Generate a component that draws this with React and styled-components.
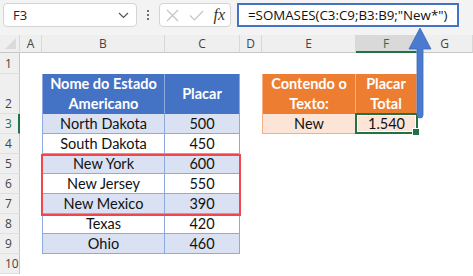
import React from "react"
import styled, { createGlobalStyle } from "styled-components"

const GlobalStyle = createGlobalStyle`
  body {
    margin: 0;
    background: #fff;
    font-family: "Liberation Sans", Arial, sans-serif;
  }
`

const Screen = styled.div`
  position: relative;
  width: 473px;
  height: 276px;
  overflow: hidden;
  background: #fff;
`

const FormulaBar = styled.div`
  display: flex;
  align-items: center;
  height: 35px;
  padding: 0 0 5px 3px;
  box-sizing: border-box;
  background: #f3f3f3;
`

const NameBox = styled.div`
  display: flex;
  align-items: center;
  justify-content: space-between;
  width: 134px;
  height: 24px;
  box-sizing: border-box;
  padding: 0 7px 0 9px;
  background: #fff;
  border: 1px solid #d4d4d4;
  border-radius: 4px;
  font-family: "Open Sans", sans-serif;
  font-size: 13px;
  color: #222;
`

const Dots = styled.div`
  width: 22px;
  display: flex;
  flex-direction: column;
  align-items: center;
  gap: 2px;
  span {
    width: 2px;
    height: 2px;
    background: #444;
    border-radius: 1px;
  }
`

const IconBox = styled.div`
  display: flex;
  align-items: center;
  justify-content: space-between;
  width: 72px;
  height: 24px;
  box-sizing: border-box;
  padding: 0 5px 0 6px;
  background: #fff;
  border: 1px solid #d4d4d4;
  border-radius: 4px;
`

const Fx = styled.span`
  font-family: "Liberation Serif", serif;
  font-style: italic;
  font-size: 16px;
  color: #333;
`

const FormulaInput = styled.div`
  display: flex;
  align-items: center;
  margin-left: 6px;
  width: 222px;
  height: 24px;
  box-sizing: border-box;
  padding-left: 9px;
  background: #fff;
  border: 2px solid #4472c4;
  font-family: "Open Sans", sans-serif;
  font-size: 13.3px;
  color: #111;
  white-space: nowrap;
`

const Sheet = styled.div`
  position: relative;
  display: grid;
  grid-template-columns: 20px 22px 123px 75px 22px 94px 61px 1fr;
  grid-template-rows: 18px 21px 40px repeat(8, 20px);
  font-family: "Lato", "Liberation Sans", sans-serif;
`

const Corner = styled.div`
  position: relative;
  background: #efefef;
  border-right: 1px solid #d8d8d8;
  border-bottom: 1px solid #c6c6c6;
  &::after {
    content: "";
    position: absolute;
    right: 3px;
    bottom: 3px;
    border-style: solid;
    border-width: 0 0 11px 11px;
    border-color: transparent transparent #dadada transparent;
  }
`

const ColHead = styled.div`
  display: flex;
  align-items: center;
  justify-content: center;
  background: ${p => (p.$active ? "#d9d9d9" : "#efefef")};
  border-right: 1px solid #d8d8d8;
  border-bottom: ${p => (p.$active ? "2px solid #217346" : "1px solid #c6c6c6")};
  font-family: "Open Sans", sans-serif;
  font-size: 12px;
  color: ${p => (p.$active ? "#217346" : "#444")};
`

const RowHead = styled.div`
  display: flex;
  align-items: flex-end;
  justify-content: flex-start;
  padding: 0 0 1px 5px;
  background: #efefef;
  border-right: ${p => (p.$active ? "2px solid #217346" : "1px solid #c6c6c6")};
  border-bottom: 1px solid #e0e0e0;
  font-family: "Open Sans", sans-serif;
  font-size: 12px;
  color: ${p => (p.$active ? "#217346" : "#444")};
`

const Blank = styled.div`
  background: #fff;
`

const DataCell = styled.div`
  display: flex;
  align-items: center;
  justify-content: center;
  text-align: center;
  font-size: 14.5px;
  line-height: 20px;
  color: #111;
`

const BlueHead = styled(DataCell)`
  background: #4472c4;
  color: #fff;
  font-weight: 700;
  border-right: 1px solid #8ea9db;
  border-left: ${p => (p.$first ? "1px solid #8ea9db" : "none")};
`

const BlueCell = styled(DataCell)`
  background: ${p => (p.$alt ? "#d9e1f2" : "#fff")};
  border-right: 1px solid #8ea9db;
  border-bottom: 1px solid #8ea9db;
  border-left: ${p => (p.$first ? "1px solid #8ea9db" : "none")};
`

const OrangeHead = styled(DataCell)`
  background: #ed7d31;
  color: #fff;
  font-weight: 700;
  border-right: 1px solid #f4b084;
  border-left: ${p => (p.$first ? "1px solid #f4b084" : "none")};
`

const OrangeCell = styled(DataCell)`
  position: relative;
  background: #fce4d6;
  border-right: 1px solid #f4b084;
  border-bottom: 1px solid #f4b084;
  border-left: ${p => (p.$first ? "1px solid #f4b084" : "none")};
  ${p =>
    p.$selected &&
    `
    border: 2px solid #217346;
    box-shadow: inset 0 0 0 1px #fff;
    margin: -1px -1px 0 -1px;
  `}
`

const Handle = styled.span`
  position: absolute;
  right: -4px;
  bottom: -4px;
  width: 6px;
  height: 6px;
  background: #217346;
  border: 1px solid #fff;
`

/* red frame over B5:C7, sits on top of the cells without taking a grid slot */
const Highlight = styled.div`
  position: absolute;
  grid-column: 3 / 5;
  grid-row: 6 / 9;
  top: 0;
  left: -1px;
  right: -1px;
  bottom: -2px;
  border: 2px solid #f0474f;
  pointer-events: none;
`

const Arrow = styled.svg`
  position: absolute;
  left: 408px;
  top: 27px;
`

const columns = ["A", "B", "C", "D", "E", "F", "G"]

const states = [
  ["North Dakota", 500],
  ["South Dakota", 450],
  ["New York", 600],
  ["New Jersey", 550],
  ["New Mexico", 390],
  ["Texas", 420],
  ["Ohio", 460],
]

const Chevron = () => (
  <svg width="11" height="7" viewBox="0 0 11 7">
    <path d="M1 1l4.5 4.5L10 1" fill="none" stroke="#555" strokeWidth="1.2" />
  </svg>
)

const Cross = () => (
  <svg width="13" height="13" viewBox="0 0 13 13">
    <path d="M1 1l11 11M12 1L1 12" stroke="#c4c4c4" strokeWidth="1.2" />
  </svg>
)

const Check = () => (
  <svg width="15" height="11" viewBox="0 0 15 11">
    <path d="M1 5.5l4.5 4.5L14 1" fill="none" stroke="#c4c4c4" strokeWidth="1.2" />
  </svg>
)

const App = () => {
  const rows = []
  for (let r = 1; r <= 10; r++) {
    const cells = [
      <RowHead key={`h${r}`} $active={r === 3}>{r}</RowHead>,
      <Blank key={`a${r}`} />,
    ]

    if (r === 2) {
      cells.push(
        <BlueHead key="b2" $first>Nome do Estado<br />Americano</BlueHead>,
        <BlueHead key="c2">Placar</BlueHead>
      )
    } else if (r >= 3 && r <= 9) {
      const [name, score] = states[r - 3]
      const alt = r % 2 === 1
      cells.push(
        <BlueCell key={`b${r}`} $first $alt={alt}>{name}</BlueCell>,
        <BlueCell key={`c${r}`} $alt={alt}>{score}</BlueCell>
      )
    } else {
      cells.push(<Blank key={`b${r}`} />, <Blank key={`c${r}`} />)
    }

    cells.push(<Blank key={`d${r}`} />)

    if (r === 2) {
      cells.push(
        <OrangeHead key="e2" $first>Contendo o<br />Texto:</OrangeHead>,
        <OrangeHead key="f2">Placar<br />Total</OrangeHead>
      )
    } else if (r === 3) {
      cells.push(
        <OrangeCell key="e3" $first>New</OrangeCell>,
        <OrangeCell key="f3" $selected>1.540<Handle /></OrangeCell>
      )
    } else {
      cells.push(<Blank key={`e${r}`} />, <Blank key={`f${r}`} />)
    }

    cells.push(<Blank key={`g${r}`} />)
    rows.push(...cells)
  }

  return (
    <Screen>
      <GlobalStyle />
      <FormulaBar>
        <NameBox>
          F3
          <Chevron />
        </NameBox>
        <Dots>
          <span />
          <span />
          <span />
        </Dots>
        <IconBox>
          <Cross />
          <Check />
          <Fx>fx</Fx>
        </IconBox>
        <FormulaInput>=SOMASES(C3:C9;B3:B9;"New*")</FormulaInput>
      </FormulaBar>
      <Sheet>
        <Corner />
        {columns.map(c => (
          <ColHead key={c} $active={c === "F"}>{c}</ColHead>
        ))}
        {rows}
        <Highlight />
      </Sheet>
      <Arrow width="24" height="92" viewBox="0 0 24 92">
        <path
          d="M12 1L23 22H15V88a3 3 0 0 1-6 0V22H1Z"
          fill="#4a7bd0"
          stroke="#3e69b5"
          strokeWidth="0.8"
        />
      </Arrow>
    </Screen>
  )
}

export default App
